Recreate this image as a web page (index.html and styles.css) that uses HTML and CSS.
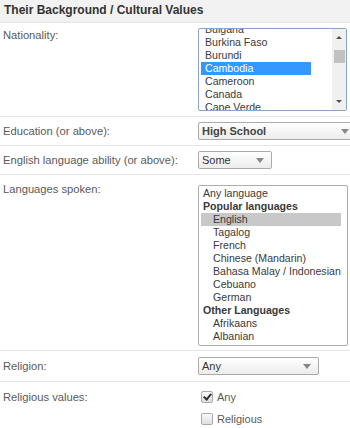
FILE: index.html
```html
<!DOCTYPE html>
<html lang="en">
<head>
    <meta charset="UTF-8">
    <meta name="viewport" content="width=device-width, initial-scale=1.0">
    <title>Their Background / Cultural Values</title>
    <link rel="stylesheet" href="styles.css">
</head>
<body>
    <div class="panel">
        <h2 class="panel-title">Their Background / Cultural Values</h2>

        <div class="row row-nationality">
            <div class="label">Nationality:</div>
            <div class="field">
                <div class="listbox nationality">
                    <ul class="options scrolled">
                        <li>Bulgaria</li>
                        <li>Burkina Faso</li>
                        <li>Burundi</li>
                        <li class="selected">Cambodia</li>
                        <li>Cameroon</li>
                        <li>Canada</li>
                        <li>Cape Verde</li>
                    </ul>
                    <div class="scrollbar">
                        <span class="sb-arrow up"></span>
                        <span class="sb-thumb"></span>
                        <span class="sb-arrow down"></span>
                    </div>
                </div>
            </div>
        </div>

        <div class="row row-select">
            <div class="label">Education (or above):</div>
            <div class="field">
                <div class="dropdown wide bold">High School</div>
            </div>
        </div>

        <div class="row row-select">
            <div class="label">English language ability (or above):</div>
            <div class="field">
                <div class="dropdown small">Some</div>
            </div>
        </div>

        <div class="row row-languages">
            <div class="label">Languages spoken:</div>
            <div class="field">
                <div class="listbox languages">
                    <ul class="options">
                        <li>Any language</li>
                        <li class="group">Popular languages</li>
                        <li class="sub highlighted">English</li>
                        <li class="sub">Tagalog</li>
                        <li class="sub">French</li>
                        <li class="sub">Chinese (Mandarin)</li>
                        <li class="sub">Bahasa Malay / Indonesian</li>
                        <li class="sub">Cebuano</li>
                        <li class="sub">German</li>
                        <li class="group">Other Languages</li>
                        <li class="sub">Afrikaans</li>
                        <li class="sub">Albanian</li>
                    </ul>
                </div>
            </div>
        </div>

        <div class="row row-select row-religion">
            <div class="label">Religion:</div>
            <div class="field">
                <div class="dropdown medium">Any</div>
            </div>
        </div>

        <div class="row row-checks">
            <div class="label">Religious values:</div>
            <div class="field checks">
                <label class="check"><span class="box checked"></span>Any</label>
                <label class="check"><span class="box"></span>Religious</label>
            </div>
        </div>
    </div>
</body>
</html>
```

FILE: styles.css
```css
body {
    margin: 0;
    padding: 0;
    background-color: #fff;
    font-family: "Liberation Sans", Arial, sans-serif;
    font-size: 11px;
    color: #5a5a5a;
    overflow: hidden;
}
.panel {
    width: 350px;
}
.panel-title {
    margin: 0;
    height: 22px;
    line-height: 21px;
    padding-left: 4px;
    font-size: 12px;
    font-weight: bold;
    color: #333;
    background-color: #f2f2f2;
    border-bottom: 1px solid #e4e4e4;
}
.row {
    display: flex;
    border-bottom: 1px solid #e6e6e6;
}
.label {
    width: 195px;
    padding-left: 3px;
    font-size: 11.2px;
    line-height: 13px;
    flex-shrink: 0;
}
.field {
    flex: 1;
}

/* rows */
.row-nationality {
    padding: 5px 0 5px;
}
.row-nationality .label {
    margin-top: 1px;
}
.row-select {
    align-items: center;
    padding: 5px 0;
}
.row-languages {
    padding: 10px 0 4px;
}
.row-languages .label {
    margin-top: -2px;
}
.row-religion {
    padding: 6px 0 6px;
}
.row-checks {
    border-bottom: none;
    padding-top: 8px;
}
.row-checks .label {
    margin-top: 1px;
}

/* list boxes */
.listbox {
    position: relative;
    overflow: hidden;
    border: 1px solid #abadb3;
    border-radius: 2px;
    background-color: #fff;
    color: #3a3a3a;
    font-size: 10.6px;
}
.listbox.nationality {
    width: 147px;
    height: 81px;
    border-color: #8aa4c8;
}
.listbox.languages {
    width: 148px;
    padding: 1px 0 2px;
}
.options {
    list-style: none;
    margin: 0;
    padding: 0;
}
.options li {
    height: 13px;
    line-height: 13px;
    padding-left: 4px;
    white-space: nowrap;
}
.options.scrolled {
    margin-top: -6px;
}
.nationality .options li {
    width: 106px;
    padding-left: 4px;
    margin-left: 2px;
}
.options li.selected {
    background-color: #3399ff;
    color: #fff;
}
.options li.group {
    font-weight: bold;
}
.options li.sub {
    padding-left: 14px;
}
.options li.highlighted {
    background-color: #c8c8c8;
    margin: 0 6px 0 2px;
    padding-left: 12px;
}
.scrollbar {
    position: absolute;
    top: 0;
    right: 0;
    width: 14px;
    height: 100%;
    background-color: #f0f0f0;
}
.sb-arrow {
    position: absolute;
    left: 4px;
    width: 0;
    height: 0;
    border-left: 3px solid transparent;
    border-right: 3px solid transparent;
}
.sb-arrow.up {
    top: 7px;
    border-bottom: 3px solid #505050;
}
.sb-arrow.down {
    bottom: 7px;
    border-top: 3px solid #505050;
}
.sb-thumb {
    position: absolute;
    top: 21px;
    left: 2px;
    width: 11px;
    height: 13px;
    background-color: #c1c1c1;
}

/* drop-downs */
.dropdown {
    position: relative;
    height: 16px;
    line-height: 16px;
    padding-left: 3px;
    border: 1px solid #aaa;
    border-radius: 2px;
    background: linear-gradient(#fff, #ececec);
    color: #333;
}
.dropdown::after {
    content: "";
    position: absolute;
    top: 6px;
    right: 7px;
    border-left: 4px solid transparent;
    border-right: 4px solid transparent;
    border-top: 5px solid #888;
}
.dropdown.bold {
    font-weight: bold;
    color: #444;
}
.dropdown.wide {
    width: 150px;
    border-right-color: transparent;
}
.dropdown.wide::after {
    right: 3px;
}
.dropdown.small {
    width: 69px;
}
.dropdown.medium {
    width: 116px;
}

/* checkboxes */
.checks {
    display: flex;
    flex-direction: column;
    gap: 9px;
    padding-left: 3px;
}
.check {
    display: flex;
    align-items: center;
    height: 13px;
    color: #5a5a5a;
}
.box {
    position: relative;
    width: 10px;
    height: 10px;
    margin-right: 4px;
    border: 1px solid #aaa;
    border-radius: 2px;
    background: linear-gradient(#fafafa, #dedede);
}
.box.checked::after {
    content: "";
    position: absolute;
    left: 3px;
    top: 0;
    width: 3px;
    height: 6px;
    border-right: 2px solid #333;
    border-bottom: 2px solid #333;
    transform: rotate(40deg);
}
```
